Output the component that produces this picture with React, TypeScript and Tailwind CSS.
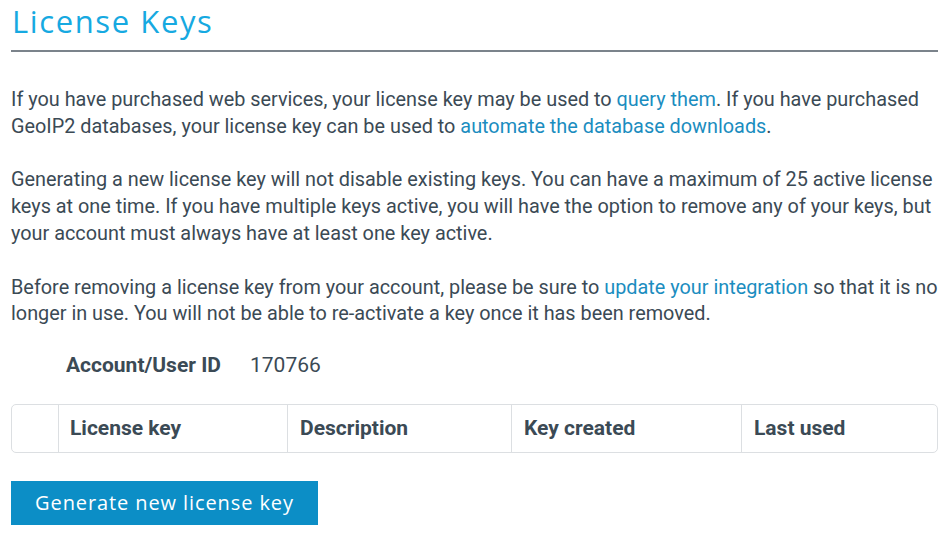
import React from "react";

export default function App() {
  const body = { fontFamily: "Roboto, 'Liberation Sans', sans-serif" };
  const head = { fontFamily: "'Open Sans', 'DejaVu Sans', sans-serif" };
  return (
    <div className="w-[950px] h-[535px] bg-white overflow-hidden pl-[11px] pr-[12px] text-[#3b4a55]" style={body}>
      <div className="border-b-2 border-[#7b838b] pl-px pb-[10px] pt-[2px]">
        <h1 className="text-[31px] leading-[38px] tracking-[1.6px] text-[#16a9e1]" style={head}>License Keys</h1>
      </div>
      <div className="text-[19.85px] leading-[26.7px] pt-[35px]">
        <p>
          If you have purchased web services, your license key may be used to{" "}
          <a className="text-[#1b8dc0]">query them</a>. If you have purchased GeoIP2 databases, your license key can be used to{" "}
          <a className="text-[#1b8dc0]">automate the database downloads</a>.
        </p>
        <p className="mt-[27px]">
          Generating a new license key will not disable existing keys. You can have a maximum of 25 active license keys at one time. If you have multiple keys active, you will have the option to remove any of your keys, but your account must always have at least one key active.
        </p>
        <p className="mt-[27px]">
          Before removing a license key from your account, please be sure to{" "}
          <a className="text-[#1b8dc0]">update your integration</a> so that it is no longer in use. You will not be able to re-activate a key once it has been removed.
        </p>
      </div>
      <div className="flex items-center mt-[24px] pl-[55px] text-[21px] leading-[26px]">
        <span className="font-bold w-[184px]">Account/User ID</span>
        <span>170766</span>
      </div>
      <div className="mt-[26px] border border-[#dcdfe2] rounded-[5px] flex h-[49px] text-[21px] font-bold">
        <div className="w-[47px] border-r border-[#dcdfe2]"></div>
        <div className="w-[229px] border-r border-[#dcdfe2] flex items-center px-[11px]">License key</div>
        <div className="w-[224px] border-r border-[#dcdfe2] flex items-center px-[12px]">Description</div>
        <div className="w-[230px] border-r border-[#dcdfe2] flex items-center px-[12px]">Key created</div>
        <div className="flex-1 flex items-center px-[12px]">Last used</div>
      </div>
      <button className="mt-[28px] w-[307px] h-[44px] bg-[#0c8ec6] text-white text-[20px] tracking-[0.9px]" style={head}>
        Generate new license key
      </button>
    </div>
  );
}
